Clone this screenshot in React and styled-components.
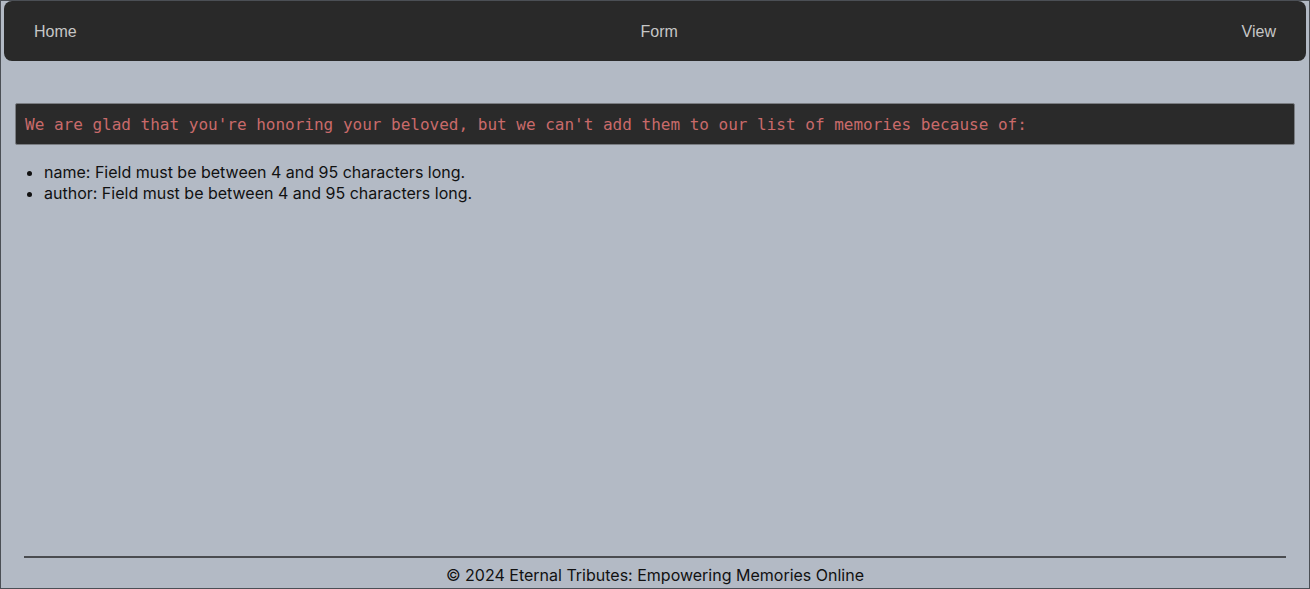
import React from "react";
import styled, { createGlobalStyle } from "styled-components";

const Global = createGlobalStyle`
  html, body { margin: 0; padding: 0; height: 100%; }
  body { background: #b3bac5; font-family: Inter, "Noto Sans", sans-serif; }
  #root { height: 100%; }
`;

const Page = styled.div`
  box-sizing: border-box;
  height: 100vh;
  border: 1px solid #4b4f55;
  background: #b3bac5;
  display: flex;
  flex-direction: column;
  padding: 0 3px;
`;

const Nav = styled.nav`
  height: 60px;
  background: #292929;
  border-radius: 8px;
  display: flex;
  align-items: center;
  justify-content: space-between;
  padding: 2px 30px 0;
  box-sizing: border-box;
  font-family: "Liberation Sans", Arial, sans-serif;
  font-size: 16px;
`;

const NavLink = styled.a`
  color: #c6c6c6;
  text-decoration: none;
`;

const Main = styled.main`
  flex: 1;
  padding: 42px 11px 0;
`;

const ErrorBox = styled.div`
  background: #2a2a2a;
  border: 1px solid #7a7d82;
  border-radius: 2px;
  display: flex;
  align-items: center;
  padding: 1px 9px 0;
  box-sizing: border-box;
  height: 42px;
  font-family: "DejaVu Sans Mono", "Liberation Mono", monospace;
  font-size: 16px;
  color: #c96a6a;
  white-space: pre;
`;

const List = styled.ul`
  margin: 17px 0 0;
  padding-left: 29px;
  font-size: 16px;
  line-height: 21px;
  color: #111;
`;

const Footer = styled.footer`
  padding: 0 20px;
  display: flex;
  flex-direction: column;
  align-items: center;
`;

const Rule = styled.hr`
  align-self: stretch;
  margin: 0;
  border: none;
  height: 2px;
  background: #4a4c50;
`;

const FooterText = styled.p`
  margin: 0;
  padding: 8px 0 4px;
  font-size: 16px;
  line-height: 18px;
  color: #111;
`;

export default function App() {
  return (
    <>
      <Global />
      <Page>
        <Nav>
          <NavLink href="#">Home</NavLink>
          <NavLink href="#">Form</NavLink>
          <NavLink href="#">View</NavLink>
        </Nav>
        <Main>
          <ErrorBox>
            We are glad that you're honoring your beloved, but we can't add them to our list of memories because of:
          </ErrorBox>
          <List>
            <li>name: Field must be between 4 and 95 characters long.</li>
            <li>author: Field must be between 4 and 95 characters long.</li>
          </List>
        </Main>
        <Footer>
          <Rule />
          <FooterText>© 2024 Eternal Tributes: Empowering Memories Online</FooterText>
        </Footer>
      </Page>
    </>
  );
}
